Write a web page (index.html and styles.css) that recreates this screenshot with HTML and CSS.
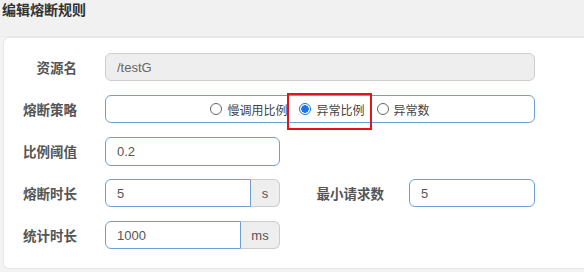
FILE: index.html
```html
<!DOCTYPE html>
<html lang="zh-CN">
<head>
<meta charset="UTF-8" />
<meta name="viewport" content="width=device-width, initial-scale=1" />
<title>编辑熔断规则</title>
<link rel="stylesheet" href="styles.css">
</head>
<body>

<div class="dialog-title">编辑熔断规则</div>

<div class="card">
  <div class="form-row">
    <label class="form-label">资源名</label>
    <input class="form-input wide" type="text" value="/testG" disabled />
  </div>

  <div class="form-row">
    <label class="form-label">熔断策略</label>
    <div class="radio-box">
      <label class="radio-item"><span class="radio"></span>慢调用比例</label>
      <label class="radio-item"><span class="radio checked"></span>异常比例</label>
      <label class="radio-item"><span class="radio"></span>异常数</label>
      <div class="highlight"></div>
    </div>
  </div>

  <div class="form-row">
    <label class="form-label">比例阈值</label>
    <input class="form-input half" type="text" value="0.2" />
  </div>

  <div class="form-row">
    <label class="form-label">熔断时长</label>
    <div class="input-group group-s">
      <input class="form-input" type="text" value="5" />
      <span class="addon">s</span>
    </div>
    <label class="form-label second">最小请求数</label>
    <input class="form-input small" type="text" value="5" />
  </div>

  <div class="form-row">
    <label class="form-label">统计时长</label>
    <div class="input-group group-ms">
      <input class="form-input" type="text" value="1000" />
      <span class="addon">ms</span>
    </div>
  </div>
</div>

</body>
</html>
```

FILE: styles.css
```css
body {
  margin: 0;
  padding: 0;
  background: #f3f3f3;
  font-family: "Liberation Sans", "Noto Sans CJK SC", sans-serif;
  color: #333;
  width: 584px;
  height: 272px;
  overflow: hidden;
}
.dialog-title {
  height: 37px;
  padding: 0 0 0 2px;
  box-sizing: border-box;
  font-size: 14px;
  line-height: 20px;
  font-weight: bold;
  color: #333;
  background: #f1f1f1;
  border-bottom: 1px solid #e9e9e9;
}
.card {
  margin-left: 3px;
  width: 581px;
  height: 232px;
  box-sizing: border-box;
  background: #fff;
  border: 1px solid #e6e6e6;
  border-right: none;
  border-radius: 6px 0 0 6px;
  padding: 15px 0 0 0;
}
.form-row {
  display: flex;
  align-items: center;
  height: 28px;
  margin-bottom: 14px;
}
.form-label {
  width: 73px;
  text-align: right;
  font-size: 13.5px;
  font-weight: bold;
  color: #555;
  margin-right: 28px;
}
.form-label.second {
  width: 104px;
  margin-right: 25px;
}
.form-input {
  height: 28px;
  box-sizing: border-box;
  border: 1px solid #6d9fd3;
  border-radius: 6px;
  padding: 0 11px;
  font-family: "Liberation Sans", sans-serif;
  font-size: 13px;
  color: #555;
  background: #fff;
  outline: none;
}
.form-input:disabled {
  background: #eee;
  border-color: #ccc;
  color: #666;
}
.wide {
  width: 430px;
}
.half {
  width: 175px;
  height: 29px;
}
.small {
  width: 126px;
}
.radio-box {
  position: relative;
  width: 430px;
  height: 28px;
  box-sizing: border-box;
  border: 1px solid #6d9fd3;
  border-radius: 6px;
  display: flex;
  justify-content: center;
  align-items: center;
  gap: 12px;
  font-family: "Noto Sans CJK SC", sans-serif;
  font-size: 12px;
  color: #444;
}
.radio-item {
  display: flex;
  align-items: center;
}
.radio {
  width: 12px;
  height: 12px;
  box-sizing: border-box;
  border: 1px solid #666;
  border-radius: 50%;
  margin-right: 5px;
  background: #fff;
}
.radio.checked {
  border: 1px solid #1a73e8;
  background: radial-gradient(circle, #1a73e8 0 3.5px, #fff 4px);
}
.highlight {
  position: absolute;
  left: 181px;
  top: -3px;
  width: 85px;
  height: 37px;
  box-sizing: border-box;
  border: 2px solid #e8121a;
}
.input-group {
  display: flex;
  width: 175px;
}
.input-group .form-input {
  flex: 1;
  min-width: 0;
  border-radius: 6px 0 0 6px;
}
.addon {
  height: 28px;
  box-sizing: border-box;
  background: #eee;
  border: 1px solid #ccc;
  border-left: none;
  border-radius: 0 6px 6px 0;
  font-size: 13px;
  color: #555;
  display: flex;
  align-items: center;
  justify-content: center;
}
.group-s .addon {
  width: 29px;
}
.group-ms .addon {
  width: 39px;
}
```
